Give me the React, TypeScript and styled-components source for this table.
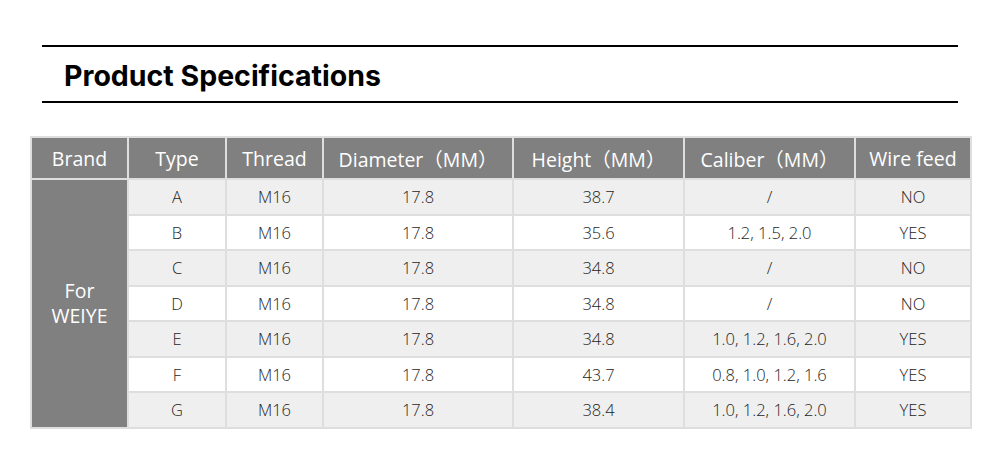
import React from "react";
import styled, { createGlobalStyle } from "styled-components";

const Global = createGlobalStyle`
  html, body { margin: 0; padding: 0; background: #fff; }
  body { width: 1000px; height: 472px; overflow: hidden; }
`;

const Page = styled.div`
  width: 1000px;
  height: 472px;
  box-sizing: border-box;
  padding-top: 45px;
  display: flex;
  flex-direction: column;
`;

const TitleBar = styled.div`
  margin: 0 42px;
  height: 52px;
  border-top: 2px solid #000;
  border-bottom: 2px solid #000;
  display: flex;
  align-items: center;
  padding-left: 22px;
  padding-top: 2px;
  box-sizing: content-box;
`;

const Title = styled.h1`
  margin: 0;
  font-family: Inter, "Liberation Sans", sans-serif;
  font-weight: 700;
  font-size: 28.5px;
  letter-spacing: 0;
  color: #000;
`;

const Table = styled.table`
  margin: 33px 0 0 30px;
  width: 940px;
  border-collapse: collapse;
  table-layout: fixed;
  font-family: "Open Sans", "Noto Sans CJK SC", sans-serif;
  border: 2px solid #dedede;
`;

const Th = styled.th`
  background: #808080;
  color: #fff;
  font-weight: 400;
  font-size: 19.5px;
  height: 40px;
  padding: 0;
  border: 2px solid #dedede;
  text-align: center;
  white-space: nowrap;
`;

const BrandCell = styled.td`
  background: #808080;
  color: #fff;
  font-size: 19.5px;
  line-height: 25px;
  text-align: center;
  border: 2px solid #dedede;
  padding: 0;
`;

const Td = styled.td<{ $shade: boolean }>`
  background: ${(p) => (p.$shade ? "#efefef" : "#ffffff")};
  color: #1e1e1e;
  font-weight: 300;
  font-size: 16.5px;
  height: 33.5px;
  padding: 0;
  text-align: center;
  border: 2px solid #dedede;
  white-space: nowrap;
`;

const widths = [97, 98, 97, 190, 171, 171, 116];
const headers = ["Brand", "Type", "Thread", "Diameter（MM）", "Height（MM）", "Caliber（MM）", "Wire feed"];

const rows = [
  ["A", "M16", "17.8", "38.7", "/", "NO"],
  ["B", "M16", "17.8", "35.6", "1.2, 1.5, 2.0", "YES"],
  ["C", "M16", "17.8", "34.8", "/", "NO"],
  ["D", "M16", "17.8", "34.8", "/", "NO"],
  ["E", "M16", "17.8", "34.8", "1.0, 1.2, 1.6, 2.0", "YES"],
  ["F", "M16", "17.8", "43.7", "0.8, 1.0, 1.2, 1.6", "YES"],
  ["G", "M16", "17.8", "38.4", "1.0, 1.2, 1.6, 2.0", "YES"],
];

export default function App() {
  return (
    <Page>
      <Global />
      <TitleBar>
        <Title>Product Specifications</Title>
      </TitleBar>
      <Table>
        <colgroup>
          {widths.map((w, i) => (
            <col key={i} style={{ width: w }} />
          ))}
        </colgroup>
        <thead>
          <tr>
            {headers.map((h) => (
              <Th key={h}>{h}</Th>
            ))}
          </tr>
        </thead>
        <tbody>
          {rows.map((r, i) => (
            <tr key={r[0]}>
              {i === 0 && (
                <BrandCell rowSpan={rows.length}>
                  For
                  <br />
                  WEIYE
                </BrandCell>
              )}
              {r.map((c, j) => (
                <Td key={j} $shade={i % 2 === 0}>
                  {c}
                </Td>
              ))}
            </tr>
          ))}
        </tbody>
      </Table>
    </Page>
  );
}
